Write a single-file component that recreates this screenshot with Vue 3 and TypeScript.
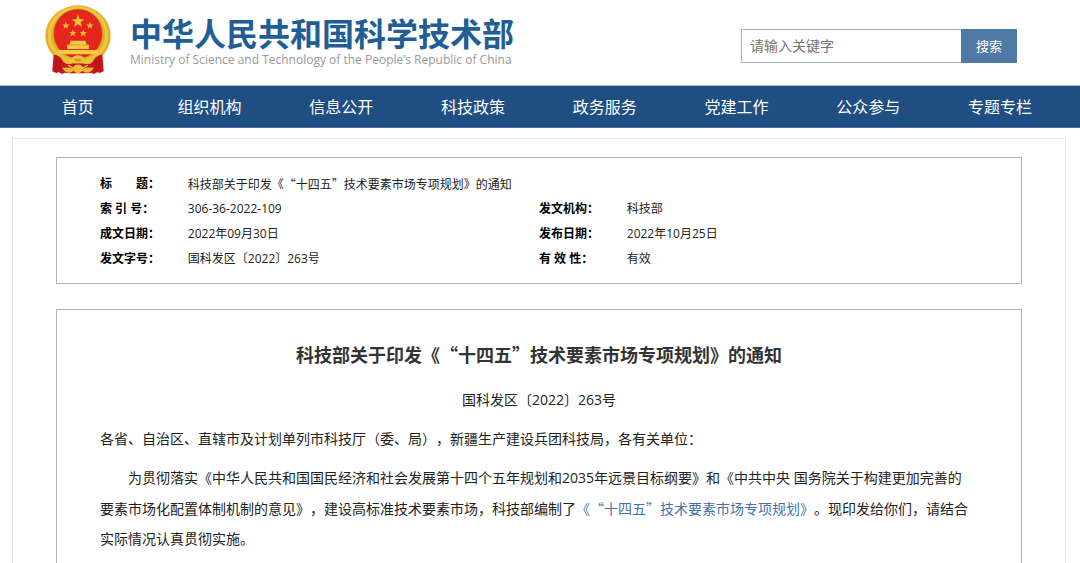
<script setup lang="ts">
import { ref } from 'vue'

interface MetaCell {
  label: string
  value: string
  wide?: boolean
}

const keyword = ref('')

const navItems: string[] = [
  '首页',
  '组织机构',
  '信息公开',
  '科技政策',
  '政务服务',
  '党建工作',
  '公众参与',
  '专题专栏',
]

const metaRows: MetaCell[][] = [
  [{ label: '标　　题：', value: '科技部关于印发《“十四五”技术要素市场专项规划》的通知', wide: true }],
  [
    { label: '索 引 号：', value: '306-36-2022-109' },
    { label: '发文机构：', value: '科技部' },
  ],
  [
    { label: '成文日期：', value: '2022年09月30日' },
    { label: '发布日期：', value: '2022年10月25日' },
  ],
  [
    { label: '发文字号：', value: '国科发区〔2022〕263号' },
    { label: '有 效 性：', value: '有效' },
  ],
]
</script>

<template>
  <div class="page" lang="zh-CN">
    <header class="header">
      <a class="brand" href="#">
        <svg class="emblem" viewBox="14 14 200 213" aria-hidden="true">
          <ellipse cx="114" cy="106" rx="99" ry="92" fill="#e3b02c" />
          <ellipse cx="114" cy="104" rx="87" ry="82" fill="none" stroke="#efc740" stroke-width="9" />
          <ellipse cx="114" cy="100" rx="74" ry="75" fill="#e5261d" stroke="#c58f1f" stroke-width="2" />
          <path d="M114 41 L119 56 H133 L122 65 L126 79 L114 71 L102 79 L106 65 L95 56 H109 Z" fill="#f0c03a" />
          <g fill="#efb935">
            <path id="star" d="M77 64 L80 72 H88 L82 77 L84 85 L77 80 L70 85 L72 77 L66 72 H74 Z" />
            <use href="#star" x="73" />
            <use href="#star" x="21" y="23" />
            <use href="#star" x="53" y="23" />
          </g>
          <path d="M92 121 H136 L140 133 H147 V146 H81 V133 H88 Z M50 149 H178 L170 162 H58 Z" fill="#f4cb43" />
          <path d="M84 134 H144" stroke="#d98a24" stroke-width="2" />
          <path d="M40 164 Q55 164 72 182 L84 206 Q86 222 74 218 L66 222 L56 217 L48 219 L36 214 Z M188 164 Q173 164 156 182 L144 206 Q142 222 154 218 L162 222 L172 217 L180 219 L192 214 Z" fill="#c9161c" />
          <path d="M50 174 L46 214 M60 182 L60 215 M178 174 L182 214 M168 182 L168 215" stroke="#a81015" stroke-width="3" fill="none" />
          <path d="M76 190 H152 L146 220 H82 Z" fill="#c9161c" />
          <path d="M60 168 Q80 166 90 179 Q100 165 114 165 Q128 165 138 179 Q148 166 168 168 L158 186 Q142 197 128 187 L114 181 L100 187 Q86 197 70 186 Z" fill="#f0bf38" />
          <path d="M102 179 Q114 172 126 179 L120 184 H108 Z" fill="#d99028" />
          <path d="M66 203 Q88 200 98 206 A16 13 0 0 1 130 206 Q140 200 162 203 Q154 218 138 218 L128 213 Q114 226 100 213 L90 218 Q74 218 66 203 Z" fill="#edba34" />
          <path d="M84 195 L100 204 M144 195 L128 204" stroke="#f0c544" stroke-width="4" />
        </svg>
        <span class="brand-text">
          <strong class="brand-name">中华人民共和国科学技术部</strong>
          <span class="brand-en">Ministry of Science and Technology of the People’s Republic of China</span>
        </span>
      </a>
      <form class="search" role="search" @submit.prevent>
        <input v-model="keyword" class="search-input" type="text" placeholder="请输入关键字" aria-label="请输入关键字" />
        <button class="search-button" type="submit">搜索</button>
      </form>
    </header>

    <nav class="nav">
      <a v-for="item in navItems" :key="item" class="nav-link" href="#">{{ item }}</a>
    </nav>

    <main class="main">
      <section class="panel meta">
        <table class="meta-table">
          <colgroup>
            <col class="col-label" />
            <col class="col-value" />
            <col class="col-label" />
            <col class="col-value" />
          </colgroup>
          <tbody>
            <tr v-for="(row, index) in metaRows" :key="index">
              <template v-for="cell in row" :key="cell.label">
                <th scope="row">{{ cell.label }}</th>
                <td :colspan="cell.wide ? 3 : 1" :class="{ quoted: cell.wide }">{{ cell.value }}</td>
              </template>
            </tr>
          </tbody>
        </table>
      </section>

      <article class="panel article">
        <h1 class="title quoted">科技部关于印发《“十四五”技术要素市场专项规划》的通知</h1>
        <p class="number">国科发区〔2022〕263号</p>
        <p class="text">各省、自治区、直辖市及计划单列市科技厅（委、局），新疆生产建设兵团科技局，各有关单位：</p>
        <p class="text indent">为贯彻落实《中华人民共和国国民经济和社会发展第十四个五年规划和2035年远景目标纲要》和《中共中央 国务院关于构建更加完善的要素市场化配置体制机制的意见》，建设高标准技术要素市场，科技部编制了<a class="link quoted" href="#">《“十四五”技术要素市场专项规划》</a>。现印发给你们，请结合实际情况认真贯彻实施。</p>
      </article>
    </main>
  </div>
</template>

<style>
body {
  margin: 0;
  background: #fff;
  overflow: hidden;
}
</style>

<style scoped>
.page {
  font-family: "Open Sans", "Noto Sans CJK SC", sans-serif;
  font-size: 14px;
  color: #222;
  text-spacing-trim: space-all;
}

.quoted {
  font-family: "Noto Sans CJK SC", sans-serif;
}

.header {
  display: flex;
  align-items: center;
  justify-content: space-between;
  height: 85px;
  padding: 0 63px 0 45px;
  border-bottom: 1px solid #a9bdd2;
}

.brand {
  display: flex;
  align-items: center;
  gap: 19px;
  margin-top: -4px;
  text-decoration: none;
}

.emblem {
  width: 66px;
  height: 71px;
}

.brand-text {
  display: flex;
  flex-direction: column;
  padding-top: 2px;
}

.brand-name {
  font-size: 32px;
  line-height: 36px;
  color: #205e95;
}

.brand-en {
  font-size: 12px;
  line-height: 16px;
  color: #999;
}

.search {
  display: flex;
  height: 34px;
  margin-top: 6px;
}

.search-input {
  box-sizing: border-box;
  width: 220px;
  padding: 0 8px;
  border: 1px solid #9db6d3;
  border-right: 0;
  border-radius: 0;
  outline: 0;
  background: #fff;
  font: inherit;
  color: #333;
}

.search-input::placeholder {
  color: #757575;
  opacity: 1;
}

.search-button {
  width: 56px;
  padding: 0;
  border: 0;
  background: #4f79a7;
  font: inherit;
  font-size: 13px;
  color: #fff;
}

.nav {
  display: grid;
  grid-template-columns: repeat(8, 1fr);
  padding: 2px 14px 0 12px;
  border-bottom: 1px solid #4a6f9c;
  background: #1f4e82;
}

.nav-link {
  font-size: 16px;
  line-height: 39px;
  text-align: center;
  text-decoration: none;
  color: #fff;
}

.main {
  margin: 10px 14px 0 12px;
  padding: 18px 43px;
  border: 1px solid #e6e6e6;
}

.panel {
  padding: 0 43px;
  border: 1px solid #b4b4b4;
}

.meta {
  padding-top: 13px;
  padding-bottom: 12px;
}

.meta-table {
  width: 100%;
  border-collapse: collapse;
  table-layout: fixed;
  font-size: 12px;
  line-height: 25px;
}

.col-label {
  width: 10%;
}

.col-value {
  width: 40%;
}

.meta-table th,
.meta-table td {
  padding: 0;
  text-align: left;
  white-space: nowrap;
}

.meta-table th {
  color: #000;
}

.article {
  margin-top: 25px;
  padding-bottom: 40px;
}

.title {
  margin: 29px 0 0;
  font-size: 18px;
  line-height: 30px;
  text-align: center;
  color: #333;
}

.number {
  margin: 16px 0 0;
  line-height: 30px;
  text-align: center;
}

.text {
  margin: 9px 0 0;
  padding-right: 4px;
  line-height: 30px;
}

.indent {
  text-indent: 2em;
}

.link {
  color: #4472a8;
  text-decoration: none;
}
</style>
